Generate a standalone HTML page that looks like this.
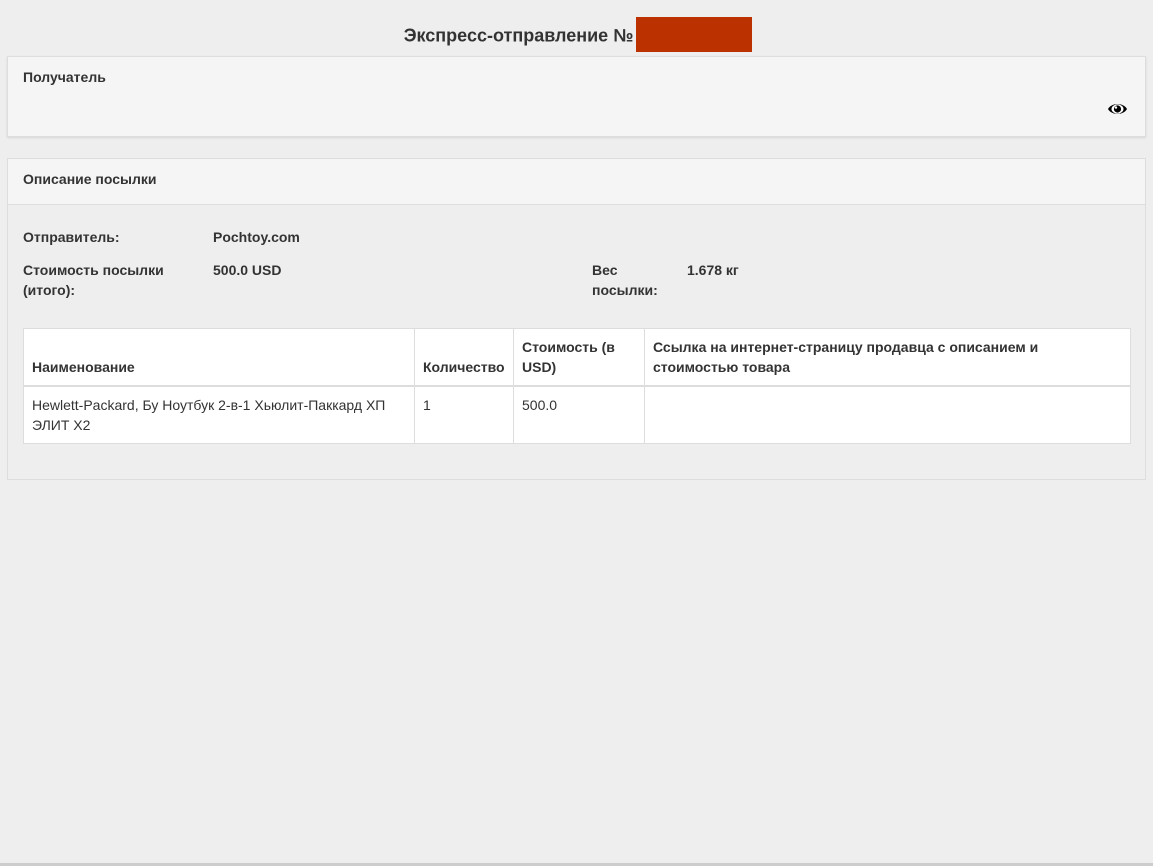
<!DOCTYPE html>
<html><head><meta charset="utf-8"><style>
body{margin:0;background:#eeeeee;font-family:"Liberation Sans",Arial,sans-serif;font-size:14px;color:#333;width:1153px;height:866px;position:relative;overflow:hidden}
.title{position:absolute;top:19px;left:0;width:1153px;text-align:center;font-size:18px;font-weight:bold;color:#333}
.red{display:inline-block;width:116px;height:35px;background:#bb3100;vertical-align:middle;position:relative;top:-2px;left:3px}
.p1{position:absolute;left:7px;top:56px;width:1137px;height:79px;background:#f5f5f5;border:1px solid #ddd;box-shadow:0 1px 2px rgba(0,0,0,.1)}
.p2{position:absolute;left:7px;top:158px;width:1137px;height:320px;border:1px solid #ddd;background:#eeeeee}
.p2h{height:45px;background:#f5f5f5;border-bottom:1px solid #ddd;position:relative}
.t{position:absolute;font-size:14px;font-weight:bold;line-height:20px;color:#333}
table{position:absolute;left:15px;top:169px;width:1108px;border-collapse:collapse;background:#fff}
td,th{border:1px solid #ddd;padding:8px;line-height:20px;vertical-align:bottom;text-align:left}
th{border-bottom:2px solid #ddd;font-weight:bold;height:40px}
td{vertical-align:top;height:39px;padding-top:8px}
.bot{position:absolute;left:0;top:863px;width:1153px;height:3px;background:#ccc}
</style></head><body>
<div class="title">Экспресс-отправление №<span class="red"></span></div>
<div class="p1">
<div class="t" style="left:15px;top:10px">Получатель</div>
<svg style="position:absolute;left:1099px;top:44px" width="21" height="16" viewBox="0 0 21 16"><path d="M1 8C4.5 1.5 16.5 1.5 20 8C16.5 14.5 4.5 14.5 1 8Z" fill="#000"/><ellipse cx="10.5" cy="8" rx="6" ry="4.6" fill="#fff"/><circle cx="10.5" cy="8" r="3.6" fill="#000"/><circle cx="9" cy="6.6" r="1.2" fill="#fff"/></svg>
</div>
<div class="p2">
<div class="p2h"><div class="t" style="left:15px;top:10px">Описание посылки</div></div>
<div class="t" style="left:15px;top:68px">Отправитель:</div>
<div class="t" style="left:205px;top:68px">Pochtoy.com</div>
<div class="t" style="left:15px;top:101px">Стоимость посылки<br>(итого):</div>
<div class="t" style="left:205px;top:101px">500.0 USD</div>
<div class="t" style="left:584px;top:101px">Вес<br>посылки:</div>
<div class="t" style="left:679px;top:101px">1.678 кг</div>
<table>
<tr><th style="width:374px">Наименование</th><th style="width:82px">Количество</th><th style="width:114px">Стоимость (в USD)</th><th>Ссылка на интернет-страницу продавца с описанием и стоимостью товара</th></tr>
<tr><td>Hewlett-Packard, Бу Ноутбук 2-в-1 Хьюлит-Паккард ХП ЭЛИТ Х2</td><td>1</td><td>500.0</td><td></td></tr>
</table>
</div>
<div class="bot"></div>
</body></html>
